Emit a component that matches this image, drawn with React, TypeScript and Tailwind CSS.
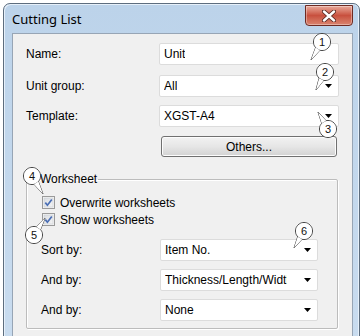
import React from "react";

const font = "font-['Liberation_Sans',Arial,sans-serif] text-[12px] text-black";

function Arrow() {
  return (
    <svg width="7" height="4" viewBox="0 0 7 4" className="shrink-0">
      <path d="M0 0h7L3.5 4z" fill="#000" />
    </svg>
  );
}

function Combo({ value, arrow = true, clip }: { value: string; arrow?: boolean; clip?: string }) {
  return (
    <div className="flex h-[22px] items-center justify-between rounded-[2px] border border-[#dcdcdc] bg-white pl-[4px] pr-[6px]">
      <span className={`overflow-hidden whitespace-nowrap ${clip ?? ""}`}>{value}</span>
      {arrow && <Arrow />}
    </div>
  );
}

function Check({ label }: { label: string }) {
  return (
    <div className="flex h-[13px] items-center gap-[5px]">
      <svg width="13" height="13" viewBox="0 0 13 13">
        <defs>
          <linearGradient id="cb" x1="0" y1="0" x2="1" y2="1">
            <stop offset="0" stopColor="#d9dde2" />
            <stop offset="1" stopColor="#f4f4f4" />
          </linearGradient>
        </defs>
        <rect x="0.5" y="0.5" width="12" height="12" fill="#f6f6f6" stroke="#9a9a9a" />
        <rect x="2" y="2" width="9" height="9" fill="url(#cb)" stroke="#c8cdd2" strokeWidth="0.6" />
        <path d="M3.3 6.6 L5.4 9.2 L9.8 3.4" fill="none" stroke="#4a6eb5" strokeWidth="1.7" />
      </svg>
      <span>{label}</span>
    </div>
  );
}

const callouts = [
  { n: "1", cx: 322, cy: 42, tx: 311, ty: 60 },
  { n: "2", cx: 325, cy: 72, tx: 316, ty: 90 },
  { n: "3", cx: 328, cy: 129, tx: 318, ty: 112 },
  { n: "4", cx: 32, cy: 176, tx: 43, ty: 194 },
  { n: "5", cx: 34, cy: 235, tx: 45, ty: 218 },
  { n: "6", cx: 304, cy: 231, tx: 294, ty: 248 },
];

function Callouts() {
  const r = 8.5;
  return (
    <svg className="pointer-events-none absolute left-0 top-0" width="364" height="336">
      {callouts.map((c) => {
        const a = Math.atan2(c.ty - c.cy, c.tx - c.cx);
        const b1x = c.cx + r * Math.cos(a - 0.3);
        const b1y = c.cy + r * Math.sin(a - 0.3);
        const b2x = c.cx + r * Math.cos(a + 0.3);
        const b2y = c.cy + r * Math.sin(a + 0.3);
        const tail = `M${b1x} ${b1y} L${c.tx} ${c.ty} L${b2x} ${b2y}`;
        return (
          <g key={c.n}>
            <circle cx={c.cx} cy={c.cy} r={r} fill="#fff" stroke="#3a3a3a" />
            <path d={tail + "Z"} fill="#fff" stroke="#3a3a3a" strokeLinejoin="miter" />
            <circle cx={c.cx} cy={c.cy} r={r - 0.5} fill="#fff" />
            <path d={tail} fill="#fff" stroke="none" />
            <text
              x={c.cx}
              y={c.cy + 4}
              textAnchor="middle"
              fontSize="11"
              fontFamily="'Liberation Sans', Arial, sans-serif"
              fill="#111"
            >
              {c.n}
            </text>
          </g>
        );
      })}
    </svg>
  );
}

export default function App() {
  return (
    <div className={`relative h-[336px] w-[364px] overflow-hidden bg-white ${font}`}>
      <div className="ml-[3px] mt-[3px] h-[345px] w-[357px] rounded-t-[7px] border border-[#5d6d7e] bg-gradient-to-b from-[#bcd3ea] to-[#c9dcef] shadow-[inset_1px_1px_0_#e6f0fa,inset_-1px_0_0_#e6f0fa]">
        {/* title bar */}
        <div className="flex h-[29px] items-start justify-between pl-[8px] pr-[6px]">
          <span className="mt-[6px] font-['Noto_Sans',sans-serif] text-[13px] leading-[18px] text-black">Cutting List</span>
          <div className="mt-[1px] flex h-[21px] w-[48px] items-center justify-center rounded-b-[4px] border border-[#6e2a22] bg-gradient-to-b from-[#e8aa9c] via-[#c8503e] to-[#d9846f] shadow-[inset_0_0_0_1px_rgba(255,255,255,0.35)]">
            <svg width="14" height="12" viewBox="0 0 14 12">
              <path d="M2 1.5 L12 10.5 M12 1.5 L2 10.5" stroke="#5a2a24" strokeWidth="4.2" strokeLinecap="round" />
              <path d="M2 1.5 L12 10.5 M12 1.5 L2 10.5" stroke="#fff" strokeWidth="2.4" strokeLinecap="round" />
            </svg>
          </div>
        </div>

        {/* client area */}
        <div className="ml-[8px] h-[320px] w-[341px] border border-[#97a5b5] bg-[#f0f0f0] pl-[13px] pr-[13px] pt-[9px]">
          <div className="grid grid-cols-[133px_180px] items-center">
            <span>Name:</span>
            <Combo value="Unit" arrow={false} />
          </div>
          <div className="mt-[10px] grid grid-cols-[133px_180px] items-center">
            <span>Unit group:</span>
            <Combo value="All" />
          </div>
          <div className="mt-[8px] grid grid-cols-[133px_180px] items-center">
            <span>Template:</span>
            <Combo value="XGST-A4" />
          </div>
          <div className="mt-[9px] grid grid-cols-[135px_176px]">
            <span />
            <button className="h-[21px] rounded-[3px] border border-[#707070] bg-gradient-to-b from-[#f2f2f2] via-[#e6e6e6] to-[#d2d2d2] text-center shadow-[inset_0_0_0_1px_#fcfcfc]">
              Others...
            </button>
          </div>

          <fieldset className="mt-[15px] h-[157px] w-[312px] rounded-[2px] border border-[#bcbcbc] shadow-[inset_1px_1px_0_#ffffff,1px_1px_0_#ffffff]">
            <legend className="ml-[12px] px-[1px] leading-[14px]">Worksheet</legend>
            <div className="flex flex-col gap-[4px] pl-[15px] pt-[10px]">
              <Check label="Overwrite worksheets" />
              <Check label="Show worksheets" />
            </div>
            <div className="mt-[13px] flex flex-col gap-[8px] pl-[14px]">
              <div className="grid grid-cols-[119px_158px] items-center">
                <span>Sort by:</span>
                <Combo value="Item No." />
              </div>
              <div className="grid grid-cols-[119px_158px] items-center">
                <span>And by:</span>
                <Combo value="Thickness/Length/Width" clip="w-[122px] shrink-0" />
              </div>
              <div className="grid grid-cols-[119px_158px] items-center">
                <span>And by:</span>
                <Combo value="None" />
              </div>
            </div>
          </fieldset>
        </div>
      </div>
      <Callouts />
    </div>
  );
}
